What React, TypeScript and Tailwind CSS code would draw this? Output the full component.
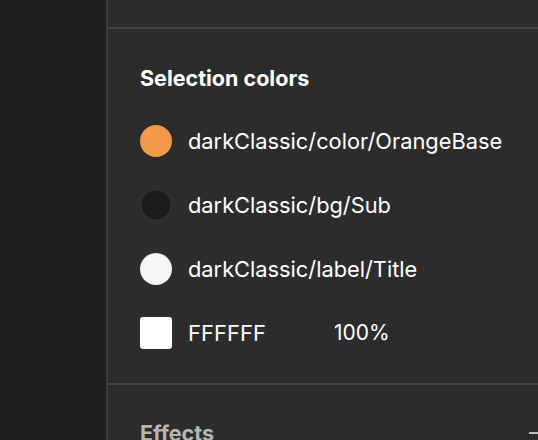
const colors = [
  { kind: "circle", swatch: "bg-[#f2994a]", label: "darkClassic/color/OrangeBase" },
  { kind: "circle", swatch: "bg-[#1c1c1e] border border-[#3a3a3a]", label: "darkClassic/bg/Sub" },
  { kind: "circle", swatch: "bg-[#f5f6f5]", label: "darkClassic/label/Title" },
];

function App() {
  return (
    <div
      className="flex h-[440px] w-[538px] overflow-hidden bg-[#2c2c2c] text-white"
      style={{ fontFamily: "Inter, 'Noto Sans', sans-serif" }}
    >
      <div className="w-[106px] shrink-0 bg-[#1e1e1e]" />
      <div className="flex flex-1 flex-col border-l-2 border-[#3d3d3d]">
        <div className="h-[29px] shrink-0 border-b-2 border-[#444444]" />

        <div className="flex flex-col border-b-2 border-[#444444] pt-[37px] pb-[34px] pl-[32px]">
          <h2 className="text-[21.5px] font-bold leading-6">Selection colors</h2>
          <div className="mt-[35px] flex flex-col gap-[32px]">
            {colors.map((c) => (
              <div key={c.label} className="flex h-8 items-center gap-4">
                <span className={`size-8 shrink-0 rounded-full ${c.swatch}`} />
                <span className="text-[21.8px] leading-6">{c.label}</span>
              </div>
            ))}
            <div className="flex h-8 items-center gap-4">
              <span className="size-8 shrink-0 rounded-[3px] bg-white" />
              <span className="w-[130px] text-[22px] leading-6">FFFFFF</span>
              <span className="text-[21px] leading-6">100%</span>
            </div>
          </div>
        </div>

        <div className="flex items-center justify-between pt-[36px] pl-[32px]">
          <span className="text-[21.5px] font-bold leading-6 text-[#b5b5b5]">Effects</span>
          <span className="h-[2px] w-[9px] bg-[#bdbdbd]" />
        </div>
      </div>
    </div>
  );
}

export default App;
